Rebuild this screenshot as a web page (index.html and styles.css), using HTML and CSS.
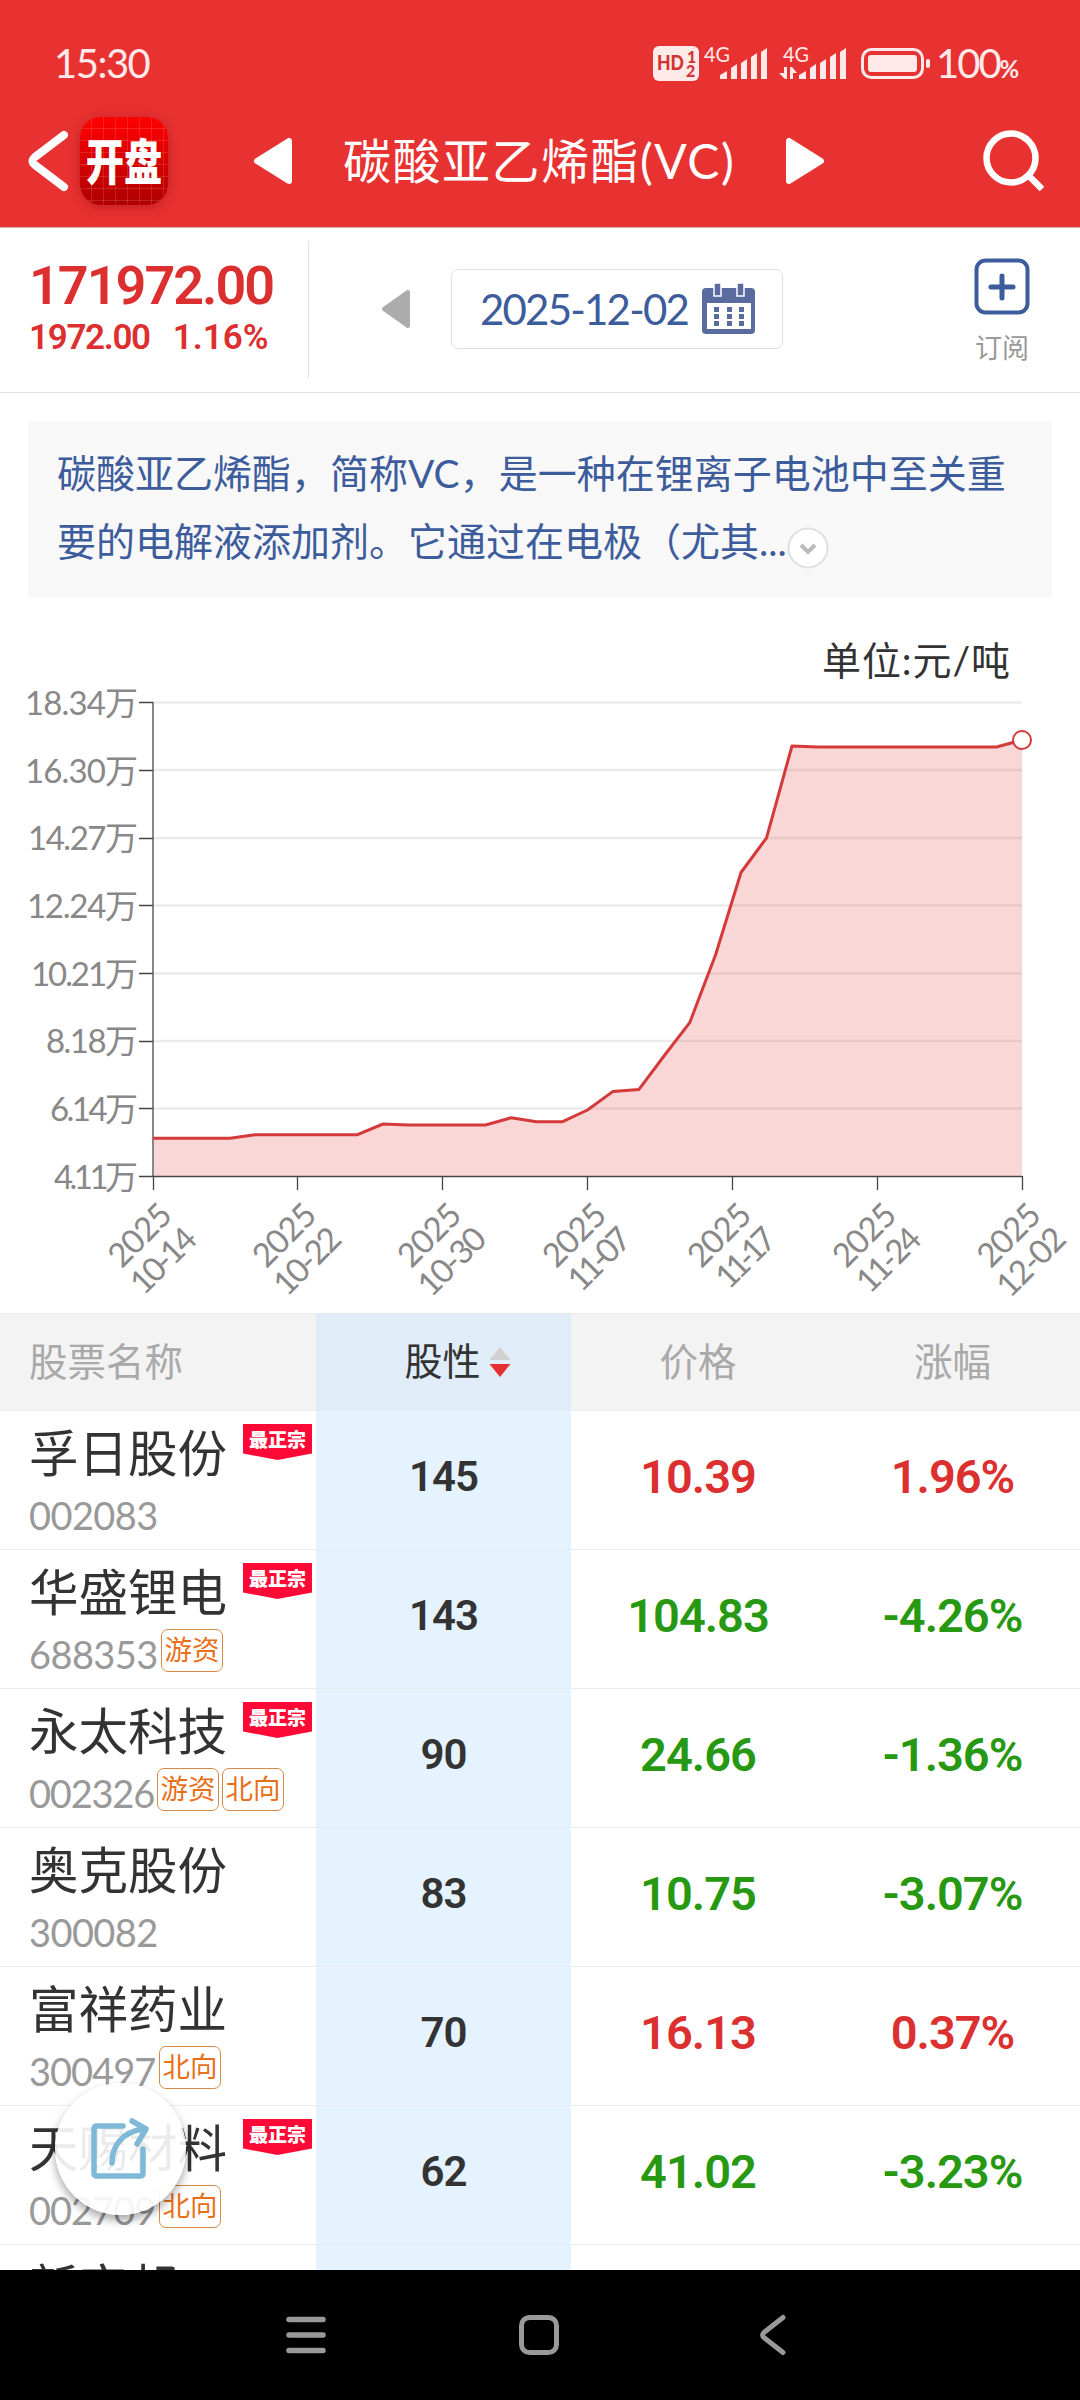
FILE: index.html
```html
<!DOCTYPE html>
<html lang="zh-CN">
<head>
    <meta charset="UTF-8">
    <meta name="viewport" content="width=device-width, initial-scale=1.0">
    <title>碳酸亚乙烯酯(VC)</title>
    <link rel="stylesheet" href="styles.css">
</head>
<body>

<header class="header">
    <div class="status">
        <span class="time">15:30</span>
        <div class="status-icons">
            <svg class="signals" width="278" height="40" viewBox="0 0 278 40">
                <rect x="0" y="3" width="46" height="35" rx="6" fill="#ffe9e9"/>
                <text class="hd" x="4" y="27" textLength="27" lengthAdjust="spacingAndGlyphs">HD</text>
                <text class="hd-num" x="34" y="20">1</text>
                <text class="hd-num" x="33" y="34">2</text>
                <text class="net" x="51" y="19" textLength="26" lengthAdjust="spacingAndGlyphs">4G</text>
                <path d="M67 36v-4l7-4v8zM78 36V25l6-4v15zM88 36V20l6-4v20zM98 36V14l6-4v26zM108 36V9l6-4v31z"/>
                <text class="net" x="130" y="19" textLength="26" lengthAdjust="spacingAndGlyphs">4G</text>
                <path d="M126 30h5v-6h3v12h-2zM137 36V24h2l5 6h-4v6zM146 36v-4l7-4v8zM157 36V25l6-4v15zM167 36V20l6-4v20zM177 36V14l6-4v26zM187 36V9l6-4v31z"/>
                <rect x="209.500" y="6.500" width="60" height="28" rx="9" fill="none" stroke="#ffe9e9" stroke-width="3"/>
                <rect x="215" y="12" width="49" height="17" rx="3"/>
                <rect x="273" y="16" width="4" height="9" rx="2"/>
            </svg>
            <span class="percent">100<small>%</small></span>
        </div>
    </div>
    <div class="titlebar">
        <svg class="back" width="44" height="64" viewBox="0 0 44 64"><path d="M38 6 9 28q-5 4 0 8l29 22" fill="none" stroke="#fff" stroke-width="8" stroke-linecap="round"/></svg>
        <div class="logo"><span>开盘</span></div>
        <svg class="prev" width="40" height="48" viewBox="0 0 40 48"><path d="M36 4v40L4 24z" fill="#fff" stroke="#fff" stroke-width="6" stroke-linejoin="round"/></svg>
        <h1 class="title">碳酸亚乙烯酯(VC)</h1>
        <svg class="next" width="40" height="48" viewBox="0 0 40 48"><path d="M4 4v40l32-20z" fill="#fff" stroke="#fff" stroke-width="6" stroke-linejoin="round"/></svg>
        <svg class="search" width="64" height="64" viewBox="0 0 64 64"><g fill="none" stroke="#fff" stroke-width="6.500"><circle cx="29" cy="29" r="24.500"/><path d="m47 47 13 13"/></g></svg>
    </div>
</header>

<section class="quote">
    <div class="price">
        <div class="last">171972.00</div>
        <div class="change"><span>1972.00</span><span class="pct">1.16%</span></div>
    </div>
    <svg class="day-prev" width="30" height="40" viewBox="0 0 30 40"><path d="M27 3v34L3 20z" fill="#acacac" stroke="#acacac" stroke-width="4" stroke-linejoin="round"/></svg>
    <div class="date">
        <span>2025-12-02</span>
        <svg width="54" height="52" viewBox="0 0 54 52">
            <rect x="0" y="5" width="53" height="46" rx="4" fill="#5a6c9f"/>
            <rect x="5" y="20" width="44" height="26" fill="#fff"/>
            <path d="M12 0h7v13h-7zM35 0h7v13h-7z" fill="#5a6c9f" stroke="#fff" stroke-width="1.500"/>
            <path d="M12 24h5v5h-5zM25 24h5v5h-5zM37 24h5v5h-5zM12 31h5v5h-5zM25 31h5v5h-5zM37 31h5v5h-5zM12 38h5v5h-5zM25 38h5v5h-5zM37 38h5v5h-5z" fill="#5a6c9f"/>
        </svg>
    </div>
    <div class="subscribe">
        <svg width="56" height="58" viewBox="0 0 56 58"><rect x="2.500" y="2.500" width="51" height="52" rx="9" fill="none" stroke="#3d5c9c" stroke-width="4"/><path d="M28 18v22M17 29h22" stroke="#3d5c9c" stroke-width="5" stroke-linecap="round"/></svg>
        <span>订阅</span>
    </div>
</section>

<section class="intro">
    碳酸亚乙烯酯，简称VC，是一种在锂离子电池中至关重<br>要的电解液添加剂。它通过在电极（尤其...<svg class="expand" width="42" height="42" viewBox="0 0 42 42"><circle cx="21" cy="21" r="19.500" fill="#fff" stroke="#e0e0e0" stroke-width="2"/><path d="m14 18 7 7 7-7" fill="none" stroke="#bbb" stroke-width="4"/></svg>
</section>

<svg class="chart" width="1080" height="716" viewBox="0 597 1080 716">
    <text class="unit" x="1010" y="675" text-anchor="end" textLength="188">单位:元/吨</text>
    <path class="grid" d="M153 702.500h869M153 770h869M153 838h869M153 905.500h869M153 973.500h869M153 1041h869M153 1108.500h869"/>
    <path class="area" d="M153 1138.300L230 1138.300 255 1134.700 357.500 1134.700 383 1124 408.500 1125 485.500 1125 511 1117.800 536.500 1121.800 562 1121.800 587.500 1110 613 1091.400 638.800 1089.600 664 1056 689.700 1022.700 715.500 955 741 872.500 766.500 838 792 746 817.500 747 996.500 747 1022 740V1176H153z"/>
    <path class="axis" d="M153 702v474"/>
    <path class="ticks" d="M139 702.500h14M139 770.500h14M139 838.500h14M139 905.500h14M139 973.500h14M139 1041.500h14M139 1108.500h14M139 1176.500h883M153.500 1176v14M297.500 1176v14M442.500 1176v14M587.500 1176v14M732.500 1176v14M877.500 1176v14M1022.500 1176v14"/>
    <path class="line" d="M153 1138.300L230 1138.300 255 1134.700 357.500 1134.700 383 1124 408.500 1125 485.500 1125 511 1117.800 536.500 1121.800 562 1121.800 587.500 1110 613 1091.400 638.800 1089.600 664 1056 689.700 1022.700 715.500 955 741 872.500 766.500 838 792 746 817.500 747 996.500 747 1022 740"/>
    <circle cx="1022" cy="740" r="9" fill="#fff" stroke="#d43a3a" stroke-width="2"/>
    <g class="labels">
        <text x="138" y="715" textLength="113">18.34万</text>
        <text x="138" y="783" textLength="113">16.30万</text>
        <text x="138" y="850" textLength="110">14.27万</text>
        <text x="138" y="918" textLength="111">12.24万</text>
        <text x="138" y="986" textLength="107">10.21万</text>
        <text x="138" y="1053" textLength="92">8.18万</text>
        <text x="138" y="1121" textLength="88">6.14万</text>
        <text x="138" y="1189" textLength="84">4.11万</text>
        <g transform="translate(153 0)"><text transform="translate(21 1217) rotate(-45)" textLength="74">2025</text><text transform="translate(46 1241) rotate(-45)" textLength="78">10-14</text></g>
        <g transform="translate(297.500 0)"><text transform="translate(21 1217) rotate(-45)" textLength="74">2025</text><text transform="translate(46 1241) rotate(-45)" textLength="80">10-22</text></g>
        <g transform="translate(442.500 0)"><text transform="translate(21 1217) rotate(-45)" textLength="74">2025</text><text transform="translate(46 1241) rotate(-45)" textLength="81">10-30</text></g>
        <g transform="translate(587.500 0)"><text transform="translate(21 1217) rotate(-45)" textLength="74">2025</text><text transform="translate(46 1241) rotate(-45)" textLength="74">11-07</text></g>
        <g transform="translate(732.500 0)"><text transform="translate(21 1217) rotate(-45)" textLength="74">2025</text><text transform="translate(46 1241) rotate(-45)" textLength="70">11-17</text></g>
        <g transform="translate(877.500 0)"><text transform="translate(21 1217) rotate(-45)" textLength="74">2025</text><text transform="translate(46 1241) rotate(-45)" textLength="76">11-24</text></g>
        <g transform="translate(1022 0)"><text transform="translate(21 1217) rotate(-45)" textLength="74">2025</text><text transform="translate(46 1241) rotate(-45)" textLength="82">12-02</text></g>
    </g>
</svg>

<main class="table">
    <div class="row head">
        <div class="stock">股票名称</div>
        <div class="score">股性<svg class="sort" width="22" height="30" viewBox="0 0 22 30"><path d="M11 0 21.500 13H.5z" fill="#d1d1d1"/><path d="M11 30 .5 17h21z" fill="#e63030"/></svg></div>
        <div>价格</div>
        <div>涨幅</div>
    </div>
    <div class="row">
        <div class="stock"><div class="name">孚日股份</div><div class="code"><span class="c1">002083</span></div><span class="best">最正宗</span></div>
        <div class="score">145</div>
        <div class="num up">10.39</div>
        <div class="num up">1.96%</div>
    </div>
    <div class="row">
        <div class="stock"><div class="name">华盛锂电</div><div class="code"><span class="c1">688353</span><i class="tag">游资</i></div><span class="best">最正宗</span></div>
        <div class="score">143</div>
        <div class="num down">104.83</div>
        <div class="num down">-4.26%</div>
    </div>
    <div class="row">
        <div class="stock"><div class="name">永太科技</div><div class="code"><span class="c2">002326</span><i class="tag">游资</i><i class="tag">北向</i></div><span class="best">最正宗</span></div>
        <div class="score">90</div>
        <div class="num down">24.66</div>
        <div class="num down">-1.36%</div>
    </div>
    <div class="row">
        <div class="stock"><div class="name">奥克股份</div><div class="code"><span class="c1">300082</span></div></div>
        <div class="score">83</div>
        <div class="num down">10.75</div>
        <div class="num down">-3.07%</div>
    </div>
    <div class="row">
        <div class="stock"><div class="name">富祥药业</div><div class="code"><span class="c3">300497</span><i class="tag">北向</i></div></div>
        <div class="score">70</div>
        <div class="num up">16.13</div>
        <div class="num up">0.37%</div>
    </div>
    <div class="row">
        <div class="stock"><div class="name">天赐材料</div><div class="code"><span class="c3">002709</span><i class="tag">北向</i></div><span class="best">最正宗</span></div>
        <div class="score">62</div>
        <div class="num down">41.02</div>
        <div class="num down">-3.23%</div>
    </div>
    <div class="row">
        <div class="stock"><div class="name">新宙邦</div></div>
        <div class="score"></div>
        <div class="num"></div>
        <div class="num"></div>
    </div>
</main>

<button class="share">
    <svg width="60" height="64" viewBox="0 0 60 64"><g fill="none" stroke="#7eb9d8" stroke-width="5.500" stroke-linecap="round" stroke-linejoin="round"><path d="M32 9H6q-3 0-3 3v44q0 3 3 3h43q3 0 3-3V32"/><path d="M21 46C21 29 31 15 52 12M41 4l14 8-9 15"/></g></svg>
</button>

<nav class="nav">
    <svg width="40" height="42" viewBox="0 0 40 42"><path d="M3 5.500h34M3 21h34M3 36.500h34" stroke="#999" stroke-width="5.500" stroke-linecap="round"/></svg>
    <svg width="42" height="42" viewBox="0 0 42 42"><rect x="3.500" y="3.500" width="35" height="35" rx="8" fill="none" stroke="#999" stroke-width="5"/></svg>
    <svg class="nav-back" width="28" height="42" viewBox="0 0 28 42"><path d="M24 3.500 5.500 18q-4 3 0 6L24 38.500" fill="none" stroke="#999" stroke-width="5" stroke-linecap="round"/></svg>
</nav>

</body>
</html>
```
FILE: styles.css
```css
* {
    box-sizing: border-box;
}
body {
    margin: 0;
    width: 1080px;
    height: 2400px;
    display: flex;
    flex-direction: column;
    overflow: hidden;
    background-color: #fff;
    color: #333;
    font-family: Lato, "Noto Sans CJK SC", sans-serif;
    font-weight: 400;
}
svg {
    display: block;
    flex-shrink: 0;
}
.header {
    height: 228px;
    flex-shrink: 0;
    background-color: #e83131;
    border-bottom: 1px solid #dcb0b0;
    color: #fff;
}
.status {
    height: 95px;
    padding: 43px 60px 0 54px;
    display: flex;
    justify-content: space-between;
    align-items: flex-start;
    color: #ffe9e9;
    line-height: 41px;
}
.time {
    font-size: 40px;
    letter-spacing: -1.5px;
}
.status-icons {
    display: flex;
    align-items: flex-start;
    gap: 5px;
}
.signals {
    fill: #ffe9e9;
    overflow: visible;
}
.percent {
    width: 84px;
    font-size: 40px;
    letter-spacing: -2px;
    white-space: nowrap;
}
.percent small {
    font-size: 24px;
    font-weight: 700;
}
.hd {
    font-size: 20px;
    font-weight: 900;
    fill: #d23434;
}
.hd-num {
    font-size: 16px;
    font-weight: 900;
    fill: #d23434;
}
.net {
    font-size: 21px;
}
.titlebar {
    height: 132px;
    padding: 0 34px 0 26px;
    display: flex;
    align-items: center;
}
.logo {
    width: 88px;
    height: 88px;
    margin-left: 10px;
    border-radius: 21px;
    background:
        repeating-linear-gradient(90deg, transparent 0 11px, rgba(255, 255, 255, 0.13) 11px 12px),
        repeating-linear-gradient(transparent 0 11px, rgba(255, 255, 255, 0.13) 11px 12px),
        linear-gradient(#ff0000, #b00000);
    box-shadow: 0 2px 12px rgba(120, 0, 0, 0.35);
    display: flex;
    align-items: center;
    justify-content: center;
    font-size: 49px;
    font-weight: 900;
    line-height: 86px;
    white-space: nowrap;
}
.logo span {
    transform: scaleX(0.78);
}
.prev {
    margin-left: 85px;
}
.title {
    width: 396px;
    margin: 0 46px 0 50px;
    font-size: 48px;
    font-weight: 400;
    letter-spacing: 1.5px;
    line-height: 64px;
    white-space: nowrap;
}
.search {
    margin-left: auto;
}
.quote {
    height: 165px;
    flex-shrink: 0;
    border-bottom: 1px solid #e4e4e4;
    display: flex;
    align-items: flex-start;
}
.price {
    width: 309px;
    height: 137px;
    margin-top: 13px;
    padding: 17px 0 0 29px;
    border-right: 1px solid #e4e4e4;
    color: #dc3030;
    font-family: Roboto, sans-serif;
    font-weight: 600;
}
.last {
    font-size: 54px;
    letter-spacing: -2px;
    line-height: 56px;
}
.change {
    display: flex;
    gap: 23px;
    font-size: 35px;
    letter-spacing: -1.3px;
    line-height: 48px;
}
.pct {
    letter-spacing: 0;
}
.day-prev {
    margin: 61px 0 0 72px;
}
.date {
    width: 332px;
    height: 80px;
    margin: 41px 0 0 40px;
    padding: 0 26px 0 28px;
    border: 1px solid #e0e0e0;
    border-radius: 7px;
    display: flex;
    align-items: center;
    justify-content: space-between;
    color: #3d5c9c;
    font-size: 42px;
    letter-spacing: -1.8px;
    white-space: nowrap;
}
.subscribe {
    margin: 30px 0 0 191px;
    display: flex;
    flex-direction: column;
    align-items: center;
    gap: 12px;
    color: #999;
    font-size: 27px;
    line-height: 40px;
}
.intro {
    height: 176px;
    margin: 28px 28px 0;
    padding: 18px 29px;
    flex-shrink: 0;
    background-color: #f8f8f8;
    color: #3d5c9c;
    font-size: 39px;
    line-height: 68px;
    white-space: nowrap;
}
.expand {
    display: inline-block;
    vertical-align: -13px;
}
.unit {
    font-size: 39px;
    fill: #333;
}
.grid {
    stroke: #ebebeb;
    stroke-width: 2.500;
}
.area {
    fill: rgba(229, 57, 53, 0.2);
}
.line {
    fill: none;
    stroke: #d43a3a;
    stroke-width: 3;
    stroke-linejoin: round;
}
.axis {
    stroke: #888;
    stroke-width: 2;
}
.ticks {
    stroke: #444;
    stroke-width: 1.300;
    fill: none;
}
.labels {
    font-size: 33px;
    text-anchor: end;
    fill: #888;
}
.table {
    flex: 1;
    min-height: 0;
    overflow: hidden;
}
.row {
    height: 139px;
    display: grid;
    grid-template-columns: 316px 255px 254px 255px;
    border-bottom: 1px solid #e9ebed;
    text-align: center;
    line-height: 132px;
}
.head {
    height: 98px;
    background-color: #f3f3f3;
    border-top: 1px solid #e8e8e8;
    color: #a9a9a9;
    font-size: 38.500px;
    line-height: 94px;
}
.stock {
    position: relative;
    padding-left: 29px;
    text-align: left;
}
.score {
    background-color: #e5f2ff;
    color: #333;
    font-family: Roboto, "Noto Sans CJK SC", sans-serif;
    font-size: 42px;
    font-weight: 600;
    letter-spacing: -1px;
}
.head .score {
    padding: 0 0 0 28px;
    display: flex;
    align-items: center;
    justify-content: center;
    gap: 8px;
    background-color: #e0ecf8;
    font-size: 38px;
    font-weight: 400;
    letter-spacing: 0;
}
.name {
    height: 78px;
    padding-top: 12px;
    font-size: 49.500px;
    line-height: 60px;
}
.code {
    height: 52px;
    display: flex;
    align-items: center;
    color: #999;
    font-size: 38px;
    line-height: 50px;
}
.c1 {
    width: 132px;
    letter-spacing: -0.6px;
}
.c2 {
    width: 128px;
    letter-spacing: -1.2px;
}
.c3 {
    width: 130px;
    letter-spacing: -1px;
}
.tag {
    width: 62px;
    height: 43px;
    margin: -7px 3px 0 0;
    border: 1.500px solid #d68a45;
    border-radius: 7px;
    color: #e8701a;
    font-size: 27.500px;
    font-style: normal;
    line-height: 39px;
    text-align: center;
}
.best {
    position: absolute;
    top: 13px;
    left: 243px;
    width: 69px;
    height: 36px;
    background-color: #ff0a36;
    clip-path: polygon(0 0, 100% 0, 100% 82%, 50% 100%, 0 82%);
    color: #fff;
    font-size: 19px;
    font-weight: 900;
    line-height: 31px;
    text-align: center;
}
.num {
    font-family: Roboto, sans-serif;
    font-size: 47px;
    font-weight: 600;
    letter-spacing: -1px;
}
.up {
    color: #dc3030;
}
.down {
    color: #279812;
}
.share {
    position: absolute;
    top: 2083px;
    left: 55px;
    width: 131px;
    height: 132px;
    padding: 0;
    border: none;
    border-radius: 50%;
    background-color: rgba(255, 255, 255, 0.9);
    box-shadow: 0 5px 10px rgba(0, 0, 0, 0.35);
    display: flex;
    align-items: center;
    justify-content: center;
}
.nav {
    height: 130px;
    padding-left: 286px;
    flex-shrink: 0;
    background-color: #000;
    display: flex;
    align-items: center;
    gap: 192px;
}
.nav-back {
    margin-left: 7px;
}
```
